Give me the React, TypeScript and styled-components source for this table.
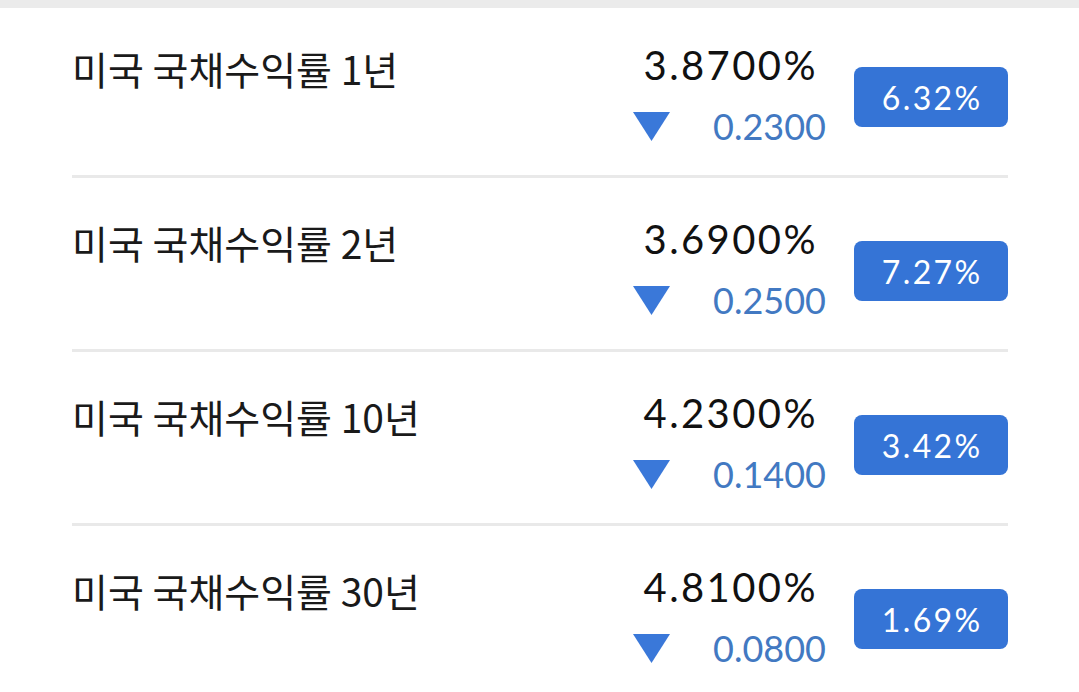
import React from "react";
import styled, { createGlobalStyle } from "styled-components";

const GlobalStyle = createGlobalStyle`
  html, body { margin: 0; padding: 0; background: #ffffff; }
  body { font-family: Lato, "Noto Sans CJK KR", sans-serif; }
`;

const Page = styled.div`
  width: 1079px;
  background: #ffffff;
`;

const TopBar = styled.div`
  height: 8px;
  background: #ebebeb;
`;

const List = styled.ul`
  list-style: none;
  margin: 0;
  padding: 0;
`;

const Row = styled.li`
  display: flex;
  align-items: flex-start;
  box-sizing: border-box;
  height: 174px;
  margin: 0 71px 0 72px;
  padding-top: 38px;
  border-bottom: 3px solid #e9e9e9;
  &:first-child {
    height: 170px;
    padding-top: 34px;
  }
  &:last-child {
    border-bottom: none;
  }
`;

const Title = styled.div`
  flex: 1;
  margin-top: 4px;
  font-family: "Noto Sans CJK KR", sans-serif;
  font-size: 39px;
  line-height: 44px;
  color: #1a1a1a;
`;

const Right = styled.div`
  display: flex;
  align-items: flex-start;
`;

const Quote = styled.div`
  display: flex;
  flex-direction: column;
  align-items: center;
`;

const Price = styled.div`
  font-family: Lato, sans-serif;
  font-size: 40px;
  line-height: 46px;
  letter-spacing: 2.4px;
  margin-right: -2.4px;
  color: #111111;
`;

const Change = styled.div`
  display: flex;
  align-items: center;
  gap: 43px;
  margin-top: 18px;
  height: 40px;
`;

const ChangeValue = styled.span`
  font-family: Lato, sans-serif;
  font-size: 36px;
  line-height: 40px;
  color: #4279c2;
`;

const Badge = styled.div`
  display: flex;
  align-items: center;
  justify-content: center;
  width: 154px;
  height: 60px;
  margin-top: 25px;
  margin-left: 28px;
  border-radius: 8px;
  background: #3574d6;
  color: #ffffff;
  font-family: Lato, sans-serif;
  font-size: 32px;
  letter-spacing: 2.4px;
  text-indent: 2.4px;
`;

const DownTriangle = () => (
  <svg width="37" height="29" viewBox="0 0 37 29" aria-hidden="true">
    <polygon points="0,0 37,0 18.5,29" fill="#3a78d9" />
  </svg>
);

const rows = [
  { title: "미국 국채수익률 1년", price: "3.8700%", change: "0.2300", rate: "6.32%" },
  { title: "미국 국채수익률 2년", price: "3.6900%", change: "0.2500", rate: "7.27%" },
  { title: "미국 국채수익률 10년", price: "4.2300%", change: "0.1400", rate: "3.42%" },
  { title: "미국 국채수익률 30년", price: "4.8100%", change: "0.0800", rate: "1.69%" },
];

export default function App() {
  return (
    <Page>
      <GlobalStyle />
      <TopBar />
      <List>
        {rows.map((r) => (
          <Row key={r.title}>
            <Title>{r.title}</Title>
            <Right>
              <Quote>
                <Price>{r.price}</Price>
                <Change>
                  <DownTriangle />
                  <ChangeValue>{r.change}</ChangeValue>
                </Change>
              </Quote>
              <Badge>{r.rate}</Badge>
            </Right>
          </Row>
        ))}
      </List>
    </Page>
  );
}
